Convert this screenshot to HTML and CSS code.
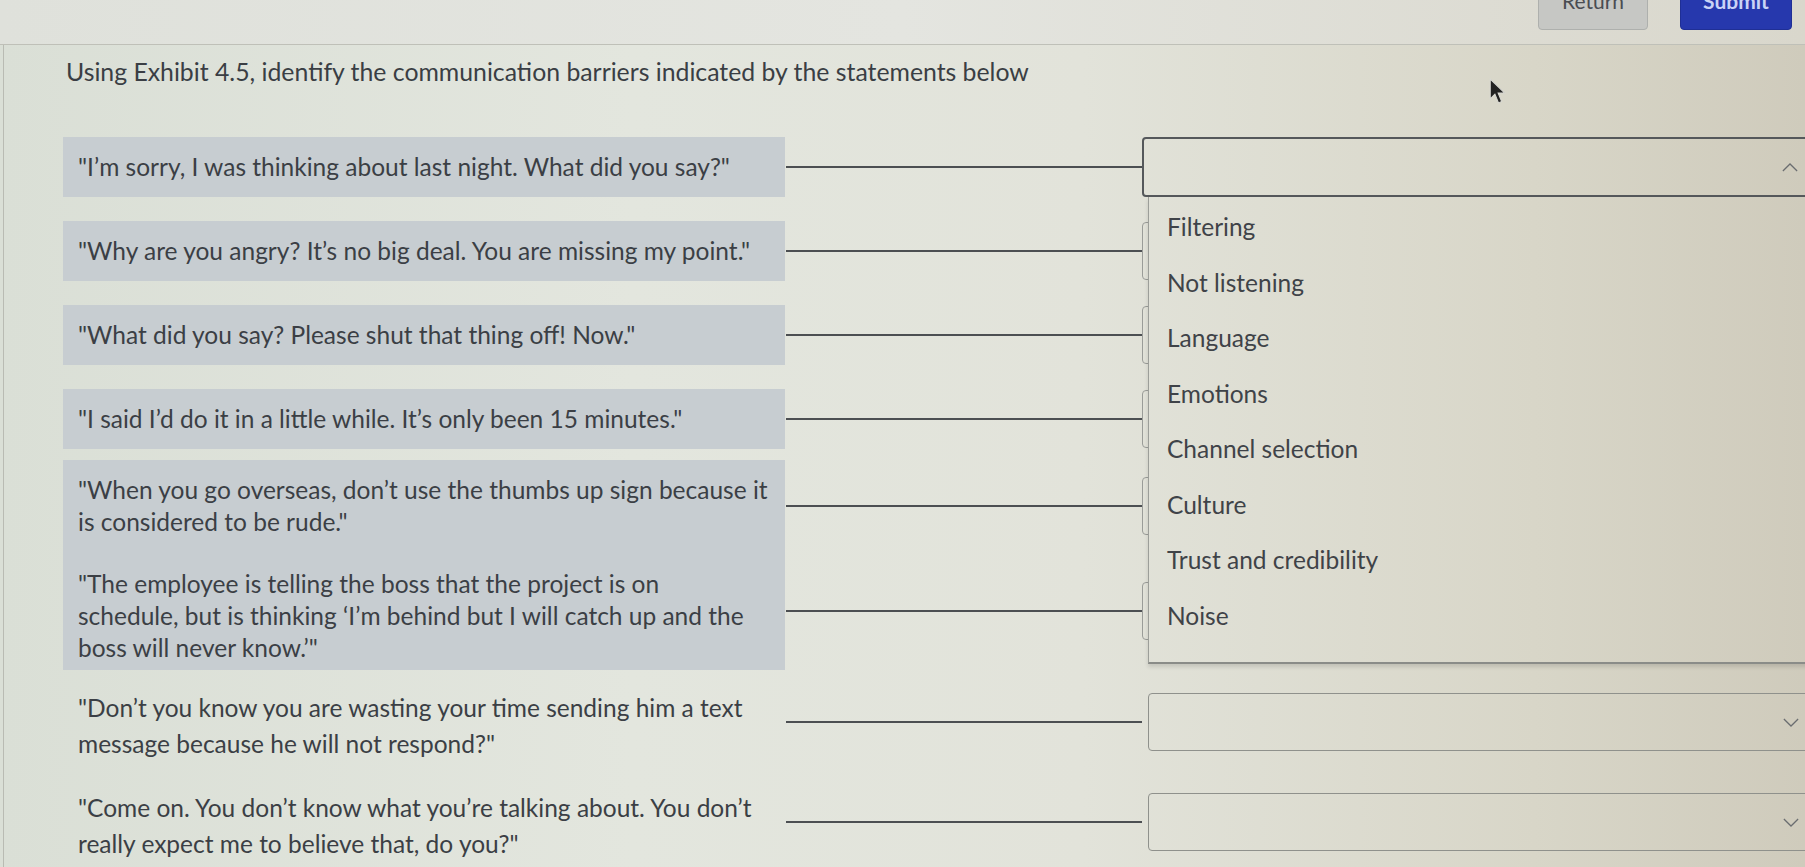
FILE: index.html
```html
<!DOCTYPE html>
<html lang="en">
<head>
<meta charset="utf-8">
<title>Communication barriers</title>
<link rel="stylesheet" href="styles.css">
</head>
<body>
<header class="topbar">
  <button class="btn btn-return">Return</button>
  <button class="btn btn-submit">Submit</button>
</header>
<main class="panel">
  <h1 class="question">Using Exhibit 4.5, identify the communication barriers indicated by the statements below</h1>
  <div class="rows">
    <div class="row r1">
      <div class="prompt">"I’m sorry, I was thinking about last night. What did you say?"</div>
      <div class="connector"></div>
      <div class="select is-open">
        <svg class="chev" viewBox="0 0 18 10"><path d="M1 9 L9 1 L17 9"/></svg>
        <ul class="options">
          <li>Filtering</li>
          <li>Not listening</li>
          <li>Language</li>
          <li>Emotions</li>
          <li>Channel selection</li>
          <li>Culture</li>
          <li>Trust and credibility</li>
          <li>Noise</li>
        </ul>
      </div>
    </div>
    <div class="row r2">
      <div class="prompt">"Why are you angry? It’s no big deal. You are missing my point."</div>
      <div class="connector"></div>
      <div class="select"></div>
    </div>
    <div class="row r3">
      <div class="prompt">"What did you say? Please shut that thing off! Now."</div>
      <div class="connector"></div>
      <div class="select"></div>
    </div>
    <div class="row r4">
      <div class="prompt">"I said I’d do it in a little while. It’s only been 15 minutes."</div>
      <div class="connector"></div>
      <div class="select"></div>
    </div>
    <div class="row r5">
      <div class="prompt">"When you go overseas, don’t use the thumbs up sign because it is considered to be rude."</div>
      <div class="connector"></div>
      <div class="select"></div>
    </div>
    <div class="row r6">
      <div class="prompt prompt-tall">"The employee is telling the boss that the project is on<br>schedule, but is thinking ‘I’m behind but I will catch up and the<br>boss will never know.’"</div>
      <div class="connector"></div>
      <div class="select"></div>
    </div>
    <div class="row r7 plain">
      <div class="prompt">"Don’t you know you are wasting your time sending him a text message because he will not respond?"</div>
      <div class="connector"></div>
      <div class="select closed">
        <svg class="chev" viewBox="0 0 18 10"><path d="M1 1 L9 9 L17 1"/></svg>
      </div>
    </div>
    <div class="row r8 plain">
      <div class="prompt">"Come on. You don’t know what you’re talking about. You don’t really expect me to believe that, do you?"</div>
      <div class="connector"></div>
      <div class="select closed">
        <svg class="chev" viewBox="0 0 18 10"><path d="M1 1 L9 9 L17 1"/></svg>
      </div>
    </div>
  </div>
  <svg class="cursor" viewBox="0 0 16 26"><path d="M1 1 L1 20 L5.5 15.5 L9 24 L12 22.7 L8.6 14.5 L15 14.5 Z"/></svg>
</main>
</body>
</html>
```

FILE: styles.css
```css
* { box-sizing: border-box; }

html, body {
  margin: 0;
  height: 100%;
  overflow: hidden;
}

body {
  font-family: Lato, "Open Sans", "Liberation Sans", sans-serif;
  color: #3b3f45;
  background: linear-gradient(90deg, #dadfd6 0%, #e3e6de 35%, #e2e3da 60%, #d8d6c8 85%, #cfcbbc 100%) fixed;
}

.topbar {
  height: 45px;
  display: flex;
  justify-content: flex-end;
  align-items: flex-start;
  gap: 32px;
  padding-right: 13px;
  border-bottom: 1px solid #bfc0b8;
  background: linear-gradient(90deg, #dfe1db 0%, #e4e5e0 50%, #d9d7cc 100%);
}

.btn {
  font-family: Lato, "Liberation Sans", sans-serif;
  font-size: 21px;
  height: 46px;
  margin-top: -16px;
  padding: 0;
  line-height: 32px;
  border-radius: 4px;
  display: flex;
  justify-content: center;
  align-items: flex-start;
}

.btn-return {
  width: 110px;
  background: #c6c7c4;
  border: 1px solid #aeb0ad;
  color: #4a4d52;
}

.btn-submit {
  width: 112px;
  background: #2638ad;
  border: 1px solid #1f2f95;
  color: #c9d3f6;
  font-weight: 700;
}

.panel {
  position: relative;
  margin-left: 3px;
  border-left: 1px solid #b9bbb3;
  padding-left: 59px;
  padding-top: 11px;
  height: calc(100% - 45px);
}

.question {
  margin: 0;
  padding-left: 3px;
  font-size: 24.8px;
  font-weight: 400;
  line-height: 32px;
  color: #3a3e44;
}

.rows {
  display: flex;
  flex-direction: column;
}

.row {
  display: grid;
  grid-template-columns: 722px 357px 680px;
  align-items: center;
}

.r1 { margin-top: 49px; }
.r2, .r3, .r4 { margin-top: 24px; }
.r5 { margin-top: 11px; }
.r6 { margin-top: 0; }
.r7 { margin-top: 12px; }
.r8 { margin-top: 20px; }

.prompt {
  align-self: stretch;
  background: #c7cdd1;
  padding: 14px 4px 14px 15px;
  font-size: 24.5px;
  line-height: 32px;
  color: #3b3f45;
}

.prompt-tall { padding-top: 16px; padding-bottom: 6px; }

.plain .prompt {
  background: transparent;
  line-height: 36px;
  padding: 8px 4px 0 15px;
}

.connector {
  height: 2px;
  background: #4c4f52;
  margin-left: 1px;
}

.select {
  position: relative;
  height: 58px;
  border: 1px solid #9a9c98;
  border-radius: 4px;
}

.select.is-open {
  align-self: stretch;
  height: auto;
  border: 2px solid #55585b;
  z-index: 2;
}

.select.closed {
  margin-left: 6px;
  border-color: #8f918c;
}

.chev {
  position: absolute;
  right: 22px;
  top: 50%;
  width: 16px;
  height: 9px;
  margin-top: -4px;
  fill: none;
  stroke: #6a6d70;
  stroke-width: 1.4;
}

.options {
  position: absolute;
  top: 58px;
  left: 4px;
  right: -2px;
  height: 467px;
  margin: 0;
  padding: 2px 0 0;
  list-style: none;
  border-left: 1px solid #9c9e99;
  border-bottom: 2px solid #8a8c88;
  background: linear-gradient(90deg, #dadfd6 0%, #e3e6de 35%, #e2e3da 60%, #d8d6c8 85%, #cfcbbc 100%) fixed;
  box-shadow: 0 3px 4px rgba(0, 0, 0, 0.12);
}

.options li {
  height: 55.5px;
  line-height: 55.5px;
  padding-left: 18px;
  font-size: 24.5px;
  color: #3f4348;
}

.cursor {
  position: absolute;
  left: 1485px;
  top: 33px;
  width: 17px;
  height: 27px;
  fill: #222;
  stroke: #d8d8d2;
  stroke-width: 1;
}
```
